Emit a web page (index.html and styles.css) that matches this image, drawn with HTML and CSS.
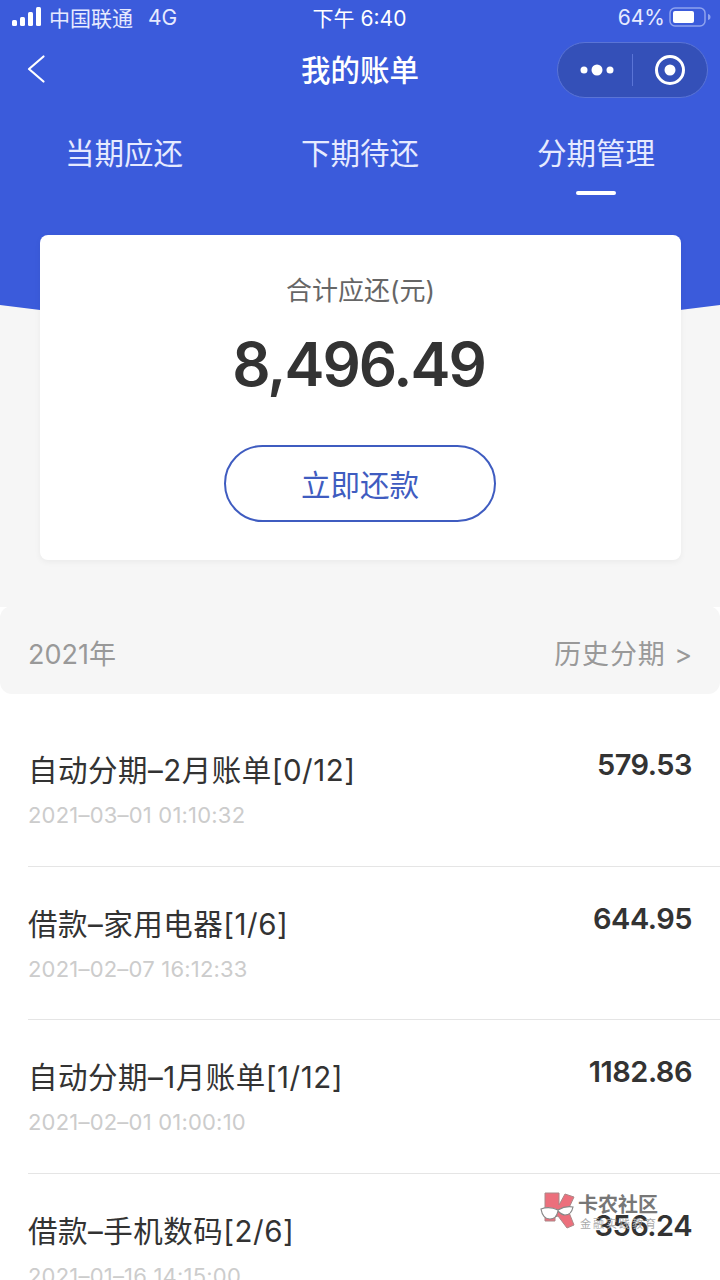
FILE: index.html
```html
<!DOCTYPE html>
<html lang="zh-CN">
<head>
<meta charset="utf-8">
<title>我的账单</title>
<link rel="stylesheet" href="styles.css">
</head>
<body>
<div class="page">
  <div class="hero-bg"></div>
  <div class="status">
    <div class="status-left">
      <svg class="signal" width="32" height="20" viewBox="0 0 32 20"><rect x="0" y="13" width="5" height="6" rx="1.5"/><rect x="8" y="10" width="5" height="9" rx="1.5"/><rect x="16" y="5" width="5" height="14" rx="1.5"/><rect x="24" y="0" width="5" height="19" rx="1.5"/></svg>
      <span class="carrier">中国联通</span>
      <span class="net">4G</span>
    </div>
    <div class="status-time">下午 6:40</div>
    <div class="status-right">
      <span class="pct">64%</span>
      <svg width="44" height="20" viewBox="0 0 44 20"><rect x="1" y="1" width="35" height="18" rx="5" fill="none" stroke="#8fa3ee" stroke-width="1.5"/><rect x="4" y="4" width="21" height="12" rx="2" fill="#fff"/><path d="M39 7c2 .5 2.500 1.500 2.500 3s-.5 2.500-2.500 3z" fill="#8fa3ee"/></svg>
    </div>
  </div>
  <div class="nav">
    <svg class="back" width="20" height="32" viewBox="0 0 20 32"><path d="M16.500 3.500 2 16l14.500 12.500" fill="none" stroke="#fff" stroke-width="2.200" stroke-linecap="round" stroke-linejoin="round"/></svg>
    <div class="nav-title">我的账单</div>
    <div class="capsule">
      <svg width="34" height="16" viewBox="0 0 34 16"><circle cx="4" cy="8" r="3.500"/><circle cx="17" cy="8" r="5.500"/><circle cx="30" cy="8" r="3.500"/></svg>
      <span class="capsule-line"></span>
      <svg width="32" height="32" viewBox="0 0 32 32"><circle cx="16" cy="16" r="13.500" fill="none" stroke="#fff" stroke-width="3"/><circle cx="16" cy="16" r="5.500"/></svg>
    </div>
  </div>
  <div class="tabs">
    <div class="tab">当期应还</div>
    <div class="tab">下期待还</div>
    <div class="tab tab-active">分期管理</div>
  </div>
  <div class="card">
    <div class="card-label">合计应还(元)</div>
    <div class="card-amount">8,496.49</div>
    <div class="card-btn">立即还款</div>
  </div>
  <div class="year-bar">
    <span class="year">2021年</span>
    <span class="history">历史分期 &gt;</span>
  </div>
  <div class="list">
    <div class="row">
      <div class="row-main"><div class="row-title">自动分期–2月账单[0/12]</div><div class="row-date">2021–03–01 01:10:32</div></div>
      <div class="row-amount">579.53</div>
    </div>
    <div class="row">
      <div class="row-main"><div class="row-title">借款–家用电器[1/6]</div><div class="row-date">2021–02–07 16:12:33</div></div>
      <div class="row-amount">644.95</div>
    </div>
    <div class="row">
      <div class="row-main"><div class="row-title">自动分期–1月账单[1/12]</div><div class="row-date">2021–02–01 01:00:10</div></div>
      <div class="row-amount">1182.86</div>
    </div>
    <div class="row">
      <div class="row-main"><div class="row-title">借款–手机数码[2/6]</div><div class="row-date">2021–01–16 14:15:00</div></div>
      <div class="row-amount">356.24</div>
    </div>
  </div>
  <div class="watermark">
    <svg class="wm-logo" width="36" height="38" viewBox="0 0 36 38"><path d="M5 1h14v12L25 2l9 3-6 13 6 15-7 3-9-12-3 1v4H5z" fill="#ec6f7c" stroke="#a88" stroke-width="1"/><path d="M1 17c5-2 11-2 17 1 5-3 10-4 15-3-1 5-4 8-8 8-3 0-5-2-7-4-1 5-4 8-8 8-5 0-8-4-9-10z" fill="#fff" stroke="#888" stroke-width="1.200"/></svg>
    <div class="wm-text"><div class="wm-name">卡农社区</div><div class="wm-sub">金融实践教育</div></div>
  </div>
</div>
</body>
</html>
```
FILE: styles.css
```css
* { box-sizing: border-box; }
html, body { margin: 0; padding: 0; background: #fff; }
body { font-family: "Inter", "Noto Sans CJK SC", sans-serif; }
.page { position: relative; width: 720px; height: 1280px; overflow: hidden; background: #fff; }
.page::before { content: ""; position: absolute; left: 0; top: 0; width: 720px; height: 607px; background: #f6f6f6; }
.hero-bg { position: absolute; left: -2360px; top: -5111px; width: 5440px; height: 5440px; border-radius: 50%; background: #3b5bdb; }
.status, .nav, .tabs, .card, .year-bar, .list { position: relative; }
.status { height: 36px; display: flex; align-items: center; justify-content: space-between; padding: 0 12px 2px; color: #fff; font-size: 21px; }
.status-left { display: flex; align-items: center; width: 220px; }
.signal { fill: #fff; margin-right: 5px; }
.carrier { color: #e6eaff; }
.net { margin-left: 15px; color: #e6eaff; }
.status-time { margin-right: 6px; }
.status-right { display: flex; align-items: center; justify-content: flex-end; width: 220px; gap: 4px; margin-right: -5px; color: #e6eaff; }
.nav { height: 68px; display: flex; align-items: center; justify-content: space-between; padding: 0 12px 0 27px; }
.back { margin-bottom: 2px; }
.nav-title { position: absolute; left: 0; right: 0; top: 0; text-align: center; color: #fff; font-size: 29.5px; font-weight: 500; line-height: 68px; }
.capsule { position: relative; width: 151px; height: 56px; border-radius: 28px; background: #3450b8; border: 1px solid #5a74d6; display: flex; align-items: center; fill: #fff; padding: 0 21px 0 22px; justify-content: space-between; }
.capsule-line { width: 1px; height: 32px; background: #5a74d6; margin-right: 4px; }
.tabs { display: flex; height: 100px; padding: 25px 6px 0; }
.tab { position: relative; flex: 1; text-align: center; color: #e6eaff; font-size: 29.5px; line-height: 48px; height: 48px; }
.tab-active::after { content: ""; position: absolute; left: 50%; margin-left: -20px; top: 62px; width: 40px; height: 4px; border-radius: 2px; background: #fff; }
.card { width: 641px; height: 325px; margin: 31px 0 0 40px; background: #fff; border-radius: 8px; box-shadow: 0 2px 6px rgba(0,0,0,.05); display: flex; flex-direction: column; align-items: center; }
.card-label { margin-top: 38px; font-size: 26px; line-height: 36px; color: #666; }
.card-amount { margin: 17px 4px 0 0; font-weight: 600; font-size: 60px; letter-spacing: -2px; line-height: 76px; color: #333; }
.card-btn { margin: 43px 1px 0 0; width: 272px; height: 77px; border: 2px solid #3f5cc0; border-radius: 39px; color: #3f5cc0; font-size: 29.5px; text-align: center; line-height: 77px; }
.year-bar { margin-top: 46px; height: 88px; background: #f6f6f6; border-radius: 12px; display: flex; align-items: center; justify-content: space-between; padding: 4px 27px 0 28px; color: #999; font-size: 27px; }
.history { letter-spacing: .9px; }
.list { padding: 19px 0 0 28px; }
.row { height: 153.6px; display: flex; justify-content: space-between; border-bottom: 1px solid #e5e5e5; padding: 35px 28px 0 0; }
.row:last-child { border-bottom: 0; }
.row-title { font-size: 29.5px; letter-spacing: .5px; line-height: 44px; color: #333; }
.row-date { margin-top: 8px; font-size: 22px; letter-spacing: .2px; line-height: 30px; color: #ccc; }
.row-amount { margin-top: -3px; font-weight: 600; font-size: 29px; letter-spacing: -.5px; line-height: 40px; color: #333; }
.watermark { position: absolute; left: 540px; top: 1192px; display: flex; align-items: flex-start; gap: 2px; }
.wm-text { padding-top: 1px; }
.wm-name { font-size: 20px; line-height: 24px; font-weight: 700; color: #777; }
.wm-sub { font-size: 11px; line-height: 14px; color: #aaa; letter-spacing: 2px; margin-left: 2px; }
```
